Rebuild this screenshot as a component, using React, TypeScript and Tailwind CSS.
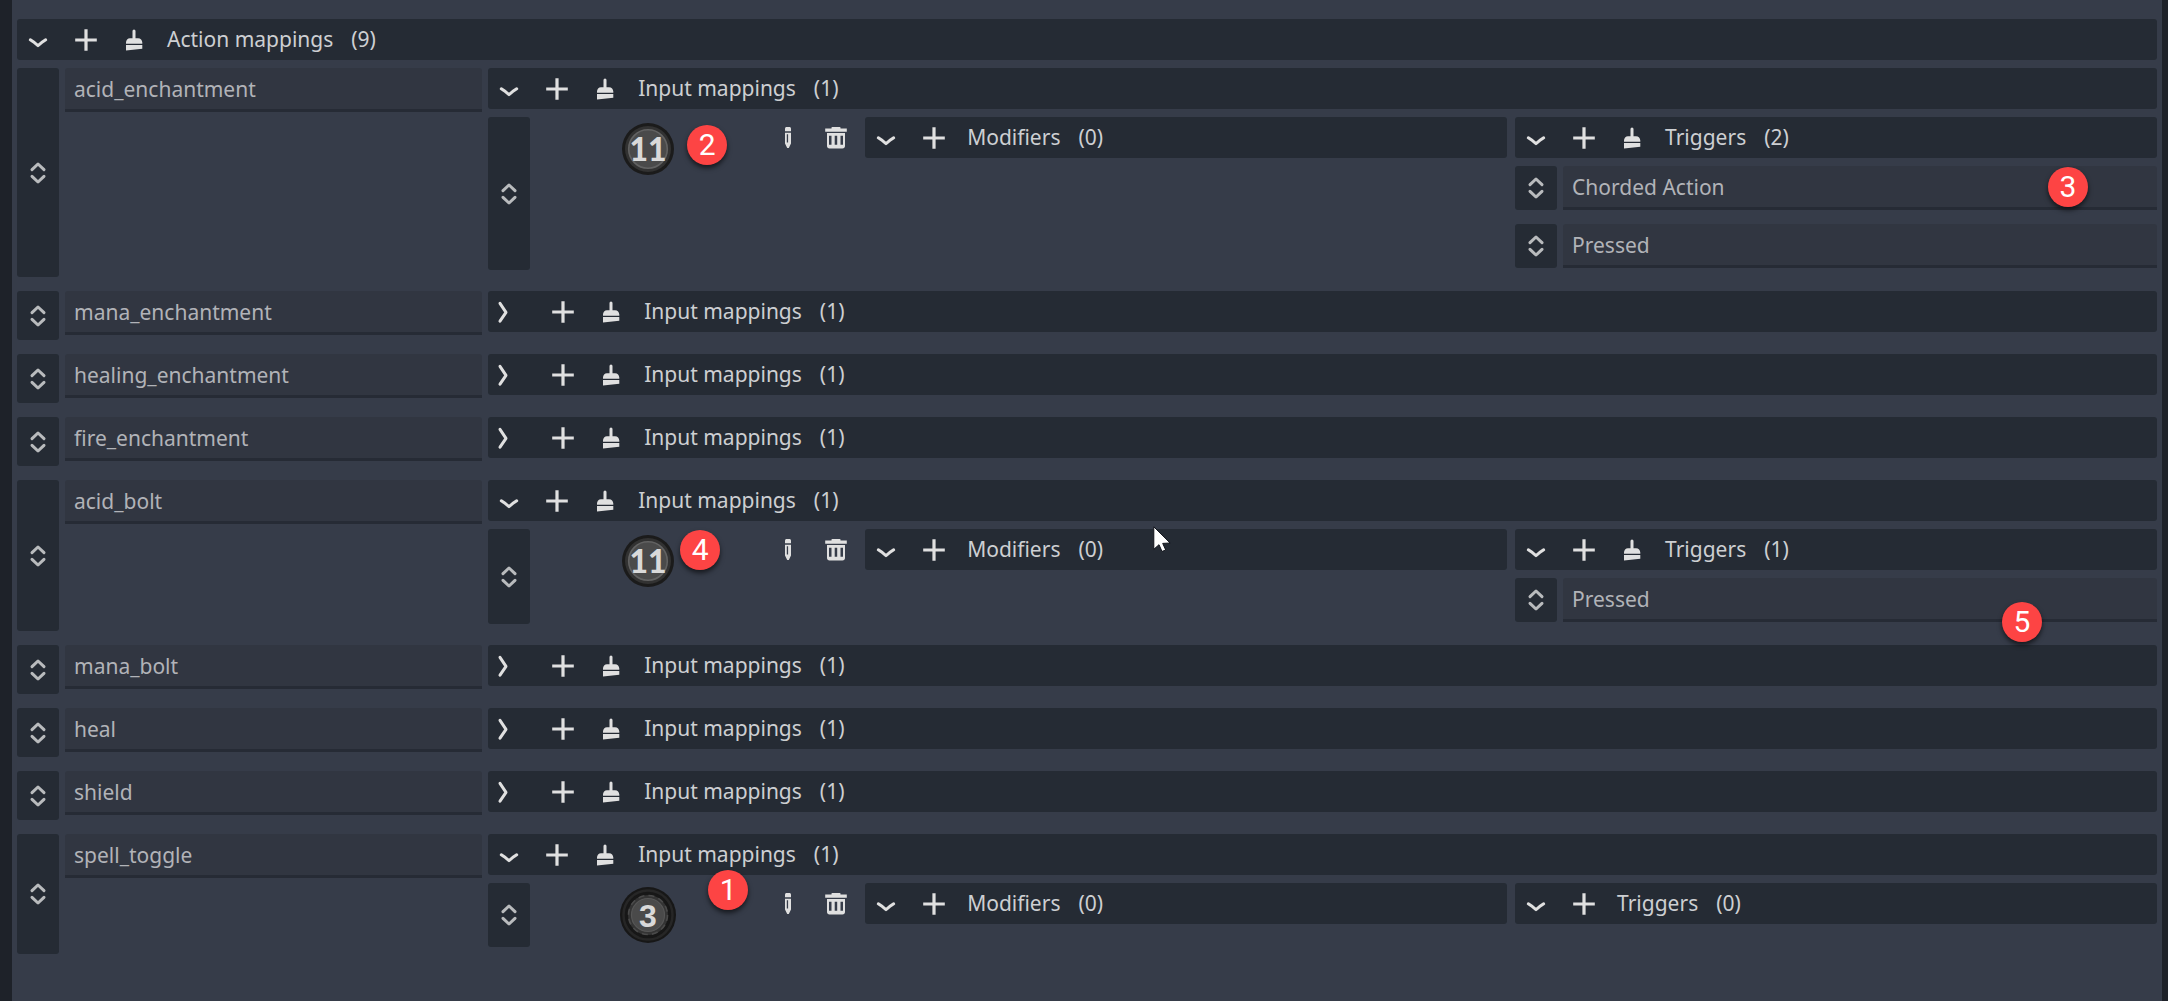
import type { ReactNode } from 'react';

const ICON = 'block h-6 w-6 shrink-0';

function ChevronDown() {
  return (
    <svg className={ICON} viewBox="0 0 24 24" fill="none" stroke="#e0e0e0" strokeWidth="3" strokeLinecap="round" strokeLinejoin="round">
      <path d="M4.3 11.8 8.4 14.6 12 17.6 15.6 14.6 19.7 11.8" />
    </svg>
  );
}

function ChevronRight() {
  return (
    <svg className={ICON} viewBox="0 0 24 24" fill="none" stroke="#e0e0e0" strokeWidth="3" strokeLinecap="round" strokeLinejoin="round">
      <path d="M6 3.3 12 12.3 6 21.2" />
    </svg>
  );
}

function Plus() {
  return (
    <svg className={ICON} viewBox="0 0 24 24" fill="#e0e0e0">
      <path d="M10.4 1.2h3.2v9.2h9.2v3.2h-9.2v9.2h-3.2v-9.2H1.200v-3.200h9.200z" />
    </svg>
  );
}

function Broom() {
  return (
    <svg className={ICON} viewBox="0 0 24 24" fill="#e0e0e0">
      <path d="M12 1.500a1.500 1.500 0 0 1 1.500 1.500v7.200h2.500c2.600 0 4.300 2 4.300 4.300v1.200H4v-1.200c0-2.300 1.700-4.300 4-4.300h2.500V3A1.500 1.500 0 0 1 12 1.500z" />
      <path d="M4 16.900h16.300v3.900L4 22.400z" />
    </svg>
  );
}

function Pencil() {
  return (
    <svg className={ICON} viewBox="0 0 24 24" fill="#e0e0e0">
      <path d="M9 5.300V2.600C9 1.700 9.700 1 10.600 1h2.800c.9 0 1.600.7 1.600 1.600v2.700z" />
      <path fillRule="evenodd" d="M9 6.700h6v10.800l-2.200 4.500h-1.600L9 17.500zM10.800 8.200v8.300h1.300V8.200z" />
    </svg>
  );
}

function Trash() {
  return (
    <svg className={ICON} viewBox="0 0 24 24" fill="#e0e0e0">
      <path d="M7.500 2.500V1.600c0-.4.3-.6.700-.6h7.600c.4 0 .7.200.7.600v.9h6.300v3.300H1.200V2.500z" />
      <path fillRule="evenodd" d="M3 7h18v13c0 1.500-1 2.500-2.500 2.500h-13C4 22.500 3 21.500 3 20zM5 9.800v9h2.500v-9zM10.700 9.800v9h2.500v-9zM16.500 9.800v9H19v-9z" />
    </svg>
  );
}

function SortArrows() {
  return (
    <svg className={ICON} viewBox="0 0 24 24" fill="none" stroke="#b9bbbd" strokeWidth="3" strokeLinecap="round" strokeLinejoin="round">
      <path d="M6 8.700 12 3l6 5.700M6 15.300 12 21l6-5.700" />
    </svg>
  );
}

function JoyButton() {
  return (
    <svg className="block h-14 w-14" viewBox="0 0 56 56" role="img" aria-label="Joypad button 11">
      <circle cx="28" cy="28" r="26" fill="#1b1b1b" />
      <circle cx="28" cy="28" r="23" fill="#323232" />
      <circle cx="28" cy="28" r="19.300" fill="#4a4a4a" stroke="#626262" strokeWidth="1.600" />
      <text x="28" y="40" textAnchor="middle" fill="#d9d9d9" className="font-['Lato',sans-serif] text-[32px] font-black">11</text>
    </svg>
  );
}

function JoyStick() {
  return (
    <svg className="block h-14 w-14" viewBox="0 0 56 56" role="img" aria-label="Joypad axis 3">
      <circle cx="28" cy="28" r="28" fill="#171717" />
      <circle cx="28" cy="28" r="24.500" fill="none" stroke="#262626" strokeWidth="2.500" />
      <circle cx="28" cy="28" r="20" fill="#343434" />
      <circle cx="28" cy="28" r="19.500" fill="none" stroke="#4a4a4a" strokeWidth="1.600" strokeDasharray="6 4.200" />
      <circle cx="28" cy="28" r="16.500" fill="#4a4a4a" stroke="#565656" strokeWidth="1.200" />
      <text x="28" y="40" textAnchor="middle" fill="#d9d9d9" className="font-['Liberation_Sans',Arial,sans-serif] text-[32px] font-bold">3</text>
    </svg>
  );
}

function Cursor() {
  return (
    <svg className="absolute -top-1 left-[288px] z-10 h-7 w-[18px]" viewBox="0 0 18 28" aria-hidden="true">
      <path d="M.8 1.800v22.500l5.200-4.600 3 6.800 3.700-1.600-3-6.500 7.400-.400z" fill="#fff" stroke="#10131a" strokeWidth="1" />
    </svg>
  );
}

function Badge({ n, place }: { n: number; place: string }) {
  return (
    <span
      className={`absolute z-10 flex h-10 w-10 items-center justify-center rounded-full bg-[#fd4444] font-['Roboto',sans-serif] text-[30px] leading-10 text-white shadow-[0_3px_5px_rgba(0,0,0,0.6)] ${place}`}
    >
      {n}
    </span>
  );
}

function IconButton({ label, children }: { label: string; children: ReactNode }) {
  return (
    <button type="button" aria-label={label} className="flex h-[41px] w-[42px] shrink-0 items-center justify-center pt-px">
      {children}
    </button>
  );
}

function Handle({ label }: { label: string }) {
  return (
    <button type="button" aria-label={label} className="flex w-[42px] shrink-0 items-center justify-center rounded-[3px] bg-[#252b34]">
      <SortArrows />
    </button>
  );
}

function Bar({ title, count, open = true, clearable = count > 0 }: { title: string; count: number; open?: boolean; clearable?: boolean }) {
  return (
    <div className="flex h-[41px] items-center gap-1.5 rounded-[3px] bg-[#252b34] text-[#cdcfd2]">
      {open ? (
        <IconButton label={`Collapse ${title}`}>
          <ChevronDown />
        </IconButton>
      ) : (
        <button type="button" aria-label={`Expand ${title}`} className="flex h-[41px] w-12 shrink-0 items-center pt-px pl-1.5">
          <ChevronRight />
        </button>
      )}
      <IconButton label={`Add to ${title}`}>
        <Plus />
      </IconButton>
      {clearable && (
        <IconButton label={`Clear ${title}`}>
          <Broom />
        </IconButton>
      )}
      <span className="px-1.5 pb-0.5">{title}</span>
      <span className="px-1.5 pb-0.5">({count})</span>
    </div>
  );
}

function Field({ label, value }: { label: string; value: string }) {
  return (
    <input
      aria-label={label}
      readOnly
      defaultValue={value}
      className="block h-11 w-full min-w-0 rounded-t-[3px] border-b-3 border-[#262b35] bg-[#313641] px-[9px] pt-px text-[#b1b3b8] outline-none"
    />
  );
}

type Trigger = { name: string; badge?: { n: number; place: string } };
type Mapping = { icon: 'button' | 'stick'; badge: { n: number; place: string }; triggers: Trigger[]; cursor?: boolean };
type Action = { name: string; mapping?: Mapping };

const actions: Action[] = [
  {
    name: 'acid_enchantment',
    mapping: {
      icon: 'button',
      badge: { n: 2, place: 'left-[151px] top-2' },
      triggers: [{ name: 'Chorded Action', badge: { n: 3, place: 'right-[69px] top-px' } }, { name: 'Pressed' }],
    },
  },
  { name: 'mana_enchantment' },
  { name: 'healing_enchantment' },
  { name: 'fire_enchantment' },
  {
    name: 'acid_bolt',
    mapping: {
      icon: 'button',
      badge: { n: 4, place: 'left-36 top-px' },
      triggers: [{ name: 'Pressed', badge: { n: 5, place: 'right-[115px] top-6' } }],
      cursor: true,
    },
  },
  { name: 'mana_bolt' },
  { name: 'heal' },
  { name: 'shield' },
  {
    name: 'spell_toggle',
    mapping: { icon: 'stick', badge: { n: 1, place: 'left-[172px] -top-[13px]' }, triggers: [] },
  },
];

function MappingRow({ mapping }: { mapping: Mapping }) {
  return (
    <div className="mt-2 mb-[7px] flex gap-1.5">
      <Handle label="Reorder input mapping" />
      <div className="grid min-w-0 flex-1 grid-cols-[minmax(0,1fr)_minmax(0,2fr)_minmax(0,2fr)] gap-2">
        <div className="relative flex items-start gap-1.5">
          <div className="flex h-16 min-w-0 flex-1 items-center justify-center pr-0.5">
            {mapping.icon === 'button' ? <JoyButton /> : <JoyStick />}
          </div>
          <IconButton label="Edit input">
            <Pencil />
          </IconButton>
          <IconButton label="Delete input">
            <Trash />
          </IconButton>
          <Badge n={mapping.badge.n} place={mapping.badge.place} />
        </div>
        <div className="relative">
          <Bar title="Modifiers" count={0} />
          {mapping.cursor && <Cursor />}
        </div>
        <div>
          <Bar title="Triggers" count={mapping.triggers.length} />
          {mapping.triggers.length > 0 && (
            <ul className="flex flex-col gap-3.5 pt-2 pb-0.5">
              {mapping.triggers.map((t) => (
                <li key={t.name} className="relative flex gap-1.5">
                  <Handle label={`Reorder ${t.name}`} />
                  <Field label="Trigger" value={t.name} />
                  {t.badge && <Badge n={t.badge.n} place={t.badge.place} />}
                </li>
              ))}
            </ul>
          )}
        </div>
      </div>
    </div>
  );
}

export default function App() {
  return (
    <div className="min-h-screen bg-[#1e2229] pr-1.5 pl-3 font-['Noto_Sans',sans-serif] text-[21px] leading-7">
      <main className="min-h-screen bg-[#363c49] px-[5px] pt-[19px]">
        <Bar title="Action mappings" count={9} />
        <ul className="mt-2 flex flex-col gap-3.5">
          {actions.map((a) => (
            <li key={a.name} className="flex gap-1.5">
              <Handle label={`Reorder ${a.name}`} />
              <div className="grid min-w-0 flex-1 grid-cols-[minmax(0,1fr)_minmax(0,4fr)] gap-1.5">
                <Field label="Action" value={a.name} />
                <div className="min-h-[49px]">
                  <Bar title="Input mappings" count={1} open={!!a.mapping} />
                  {a.mapping && <MappingRow mapping={a.mapping} />}
                </div>
              </div>
            </li>
          ))}
        </ul>
      </main>
    </div>
  );
}
